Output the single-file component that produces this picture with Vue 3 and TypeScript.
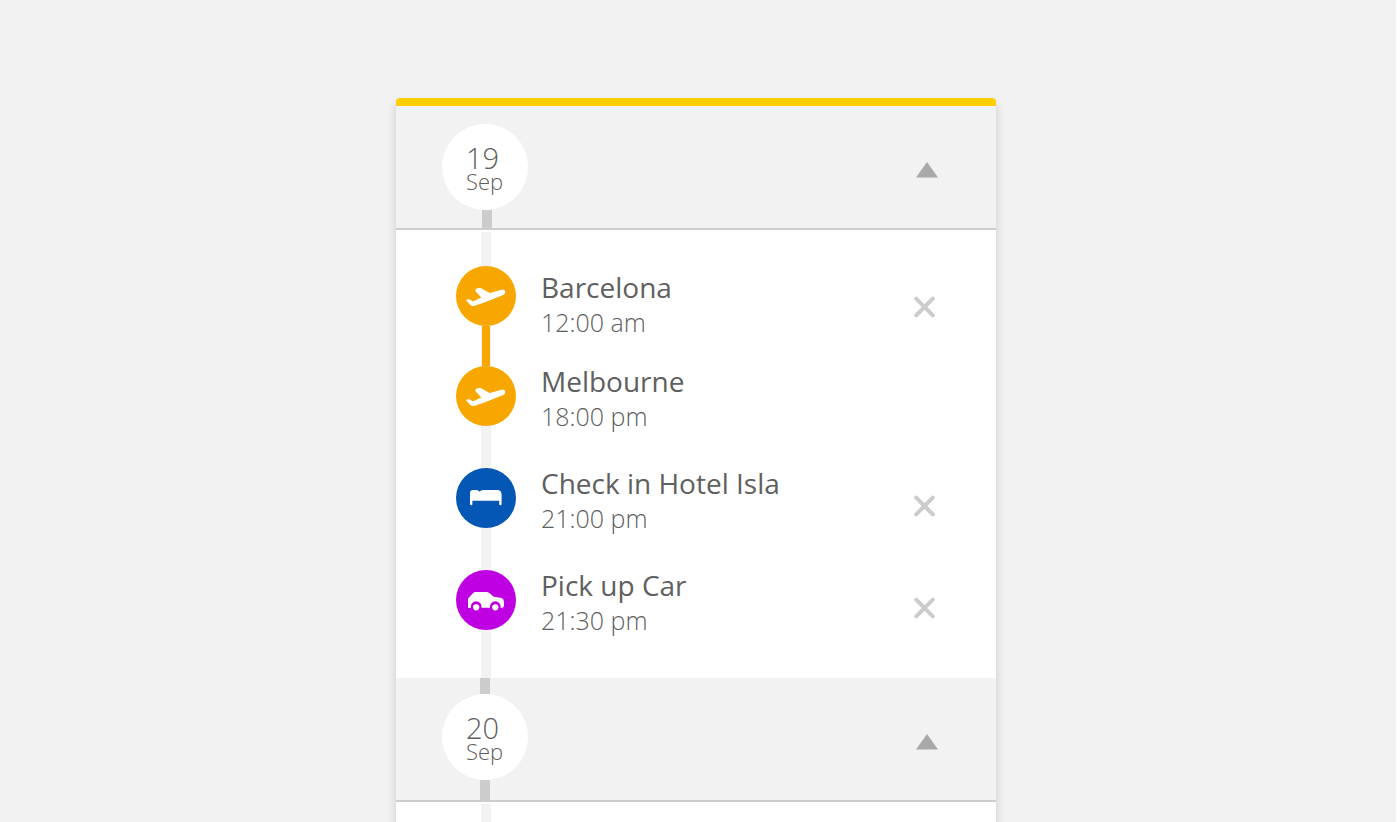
<script setup lang="ts">
import { ref } from 'vue'

type Kind = 'flight' | 'hotel' | 'car'

interface Stop {
  id: number
  kind: Kind
  title: string
  time: string
  leg?: 'departure' | 'arrival'
}

interface Day {
  id: number
  day: string
  month: string
  open: boolean
  stops: Stop[]
}

const days = ref<Day[]>([
  {
    id: 1,
    day: '19',
    month: 'Sep',
    open: true,
    stops: [
      { id: 1, kind: 'flight', title: 'Barcelona', time: '12:00 am', leg: 'departure' },
      { id: 2, kind: 'flight', title: 'Melbourne', time: '18:00 pm', leg: 'arrival' },
      { id: 3, kind: 'hotel', title: 'Check in Hotel Isla', time: '21:00 pm' },
      { id: 4, kind: 'car', title: 'Pick up Car', time: '21:30 pm' },
    ],
  },
  { id: 2, day: '20', month: 'Sep', open: true, stops: [] },
])

function remove(day: Day, stop: Stop) {
  day.stops = day.stops.filter((s) => s.id !== stop.id)
}
</script>

<template>
  <main class="page">
    <div class="card">
      <section v-for="day in days" :key="day.id" class="day">
        <header class="day-header">
          <div class="date-rail">
            <span class="joint joint-top"></span>
            <time class="date">
              <span class="date-day">{{ day.day }}</span>
              <span class="date-month">{{ day.month }}</span>
            </time>
            <span class="joint joint-bottom"></span>
          </div>
          <button
            class="toggle"
            type="button"
            :aria-label="`Toggle ${day.day} ${day.month}`"
            :aria-expanded="day.open"
            @click="day.open = !day.open"
          >
            <svg width="22" height="16" viewBox="0 0 22 16" :class="{ flipped: !day.open }">
              <path d="M11 0 22 15.5H0Z" fill="#a9a9a9" />
            </svg>
          </button>
        </header>
        <ul v-if="day.open" class="stops">
          <li v-for="stop in day.stops" :key="stop.id" class="stop" :class="stop.leg">
            <div class="marker">
              <span class="badge" :class="stop.kind">
                <svg v-if="stop.kind === 'flight'" width="60" height="60" viewBox="0 0 60 60">
                  <path
                    d="M10.2 34.4Q10.6 33 12.5 33.2Q14.8 33.2 16.4 35.2L18.4 34.7L25.3 31.6L19.3 25Q19 24 20.3 22.8Q22 21.8 24.6 22.1L33.8 27L44.5 24Q48.6 22.8 49.2 25.4Q49.6 28 46.6 29.3L27 37L18.6 39.7Q16 40.3 14.6 39.3Z"
                    fill="#fff"
                  />
                </svg>
                <svg v-else-if="stop.kind === 'hotel'" width="60" height="60" viewBox="0 0 60 60">
                  <path
                    d="M14 36V25.2Q14 22 17.2 22H20.4Q22.4 22 23.6 23.7Q24.7 22 27 22H41.2Q45.6 22 45.6 27V36.2Q45.6 37.3 44.4 37.3Q43.2 37.3 43.2 36.2V32.8H16.4V36.2Q16.4 37.3 15.2 37.3Q14 37.3 14 36Z"
                    fill="#fff"
                  />
                </svg>
                <svg v-else width="60" height="60" viewBox="0 0 60 60">
                  <path
                    d="M12 38V30Q12 28.6 13 27.6L17.4 22.8Q18.2 22 19.5 22H30.6Q32 22 33 22.8L37.4 26.6Q38 27 39 27L44.6 27.8Q48 28.6 48 32V35.5Q48 37.7 46 37.7H44.6A5.4 5.4 0 1 0 34 37.7H25.5A5.4 5.4 0 1 0 14.9 37.7Z"
                    fill="#fff"
                  />
                  <circle cx="20.2" cy="37.3" r="3.1" fill="#fff" />
                  <circle cx="39.3" cy="37.3" r="3.1" fill="#fff" />
                </svg>
              </span>
            </div>
            <div class="text">
              <h2 class="title">{{ stop.title }}</h2>
              <p class="time">{{ stop.time }}</p>
            </div>
            <button
              v-if="stop.leg !== 'arrival'"
              class="remove"
              type="button"
              :aria-label="`Remove ${stop.title}`"
              @click="remove(day, stop)"
            >
              <svg width="22" height="22" viewBox="0 0 22 22">
                <path
                  d="M2.2 2.7 18.8 19.3M18.8 2.7 2.2 19.3"
                  stroke="#ccc"
                  stroke-width="4"
                  stroke-linecap="round"
                />
              </svg>
            </button>
          </li>
        </ul>
      </section>
    </div>
  </main>
</template>

<style>
body {
  background: #fff;
}
</style>

<style scoped>
.page {
  box-sizing: border-box;
  height: 100vh;
  overflow: hidden;
  padding: 98px 4px 0 0;
  font-family: 'Open Sans', 'Noto Sans', sans-serif;
  color: #606060;
  background: #f2f2f2;
  border-right: 4px solid #fff;
}

.card {
  max-width: 600px;
  min-height: 100vh;
  margin: 0 auto;
  background: #fff;
  border-top: 8px solid #ffce00;
  border-radius: 4px 4px 0 0;
  box-shadow: 0 6px 8px 1px rgba(0, 0, 0, 0.14);
}

.day-header {
  display: flex;
  justify-content: space-between;
  align-items: center;
  height: 122px;
  padding: 0 58px 0 46px;
  background: #f2f2f2;
  border-bottom: 2px solid #ccc;
}

.date-rail {
  display: flex;
  flex-direction: column;
  align-items: center;
  height: 100%;
}

.joint {
  width: 10px;
  background: #ccc;
}

.joint-top {
  height: 16px;
}

.joint-bottom {
  flex: 1;
}

.day:first-child .joint-top {
  height: 18px;
  background: none;
}

.day:first-child .joint-bottom {
  margin-left: 4px;
}

.date {
  display: flex;
  flex-direction: column;
  box-sizing: border-box;
  width: 86px;
  height: 86px;
  padding: 20px 0 0 24px;
  background: #fff;
  border-radius: 50%;
  font-weight: 300;
}

.date-day {
  font-size: 29px;
  line-height: 28px;
}

.date-month {
  font-size: 22px;
  line-height: 18px;
}

.toggle,
.remove {
  padding: 0;
  background: none;
  border: 0;
  cursor: pointer;
}

.toggle {
  margin-top: 6px;
}

.toggle svg,
.remove svg,
.badge svg {
  display: block;
}

.flipped {
  transform: rotate(180deg);
}

.stops {
  box-sizing: border-box;
  min-height: 100px;
  margin: 0;
  padding: 36px 60px 6px;
  list-style: none;
  background: linear-gradient(#f2f2f2, #f2f2f2) 85px 2px / 10px 100% no-repeat;
}

.stop {
  display: flex;
  align-items: flex-start;
  height: 102px;
}

.departure {
  height: 100px;
}

.marker {
  display: flex;
  flex-direction: column;
  align-items: center;
  height: 100%;
}

.departure .marker::after {
  content: '';
  flex: 1;
  width: 8px;
  background: #f8a700;
}

.badge {
  width: 60px;
  height: 60px;
  border-radius: 50%;
}

.flight {
  background: #f8a700;
}

.hotel {
  background: #0457b5;
}

.car {
  background: #bf00e2;
}

.text {
  flex: 1;
  padding-left: 25px;
}

.departure .text {
  padding-top: 6px;
}

.title {
  margin: 0;
  font-size: 28px;
  font-weight: 400;
  line-height: 30px;
}

.time {
  margin: 0;
  font-size: 25px;
  font-weight: 300;
  line-height: 40px;
}

.remove {
  margin-top: 27px;
}

.departure .remove {
  margin-top: 30px;
}
</style>
